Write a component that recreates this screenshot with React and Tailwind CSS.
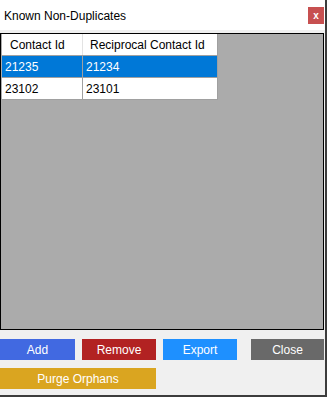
import { useState } from "react";

const rows = [
  { id: "21235", rec: "21234" },
  { id: "23102", rec: "23101" },
];

function Btn({ label, className }) {
  return (
    <button
      className={`h-[21px] text-white text-[12px] leading-none flex items-center justify-center ${className}`}
    >
      {label}
    </button>
  );
}

export default function App() {
  const [selected, setSelected] = useState(0);

  return (
    <div
      className="w-[327px] h-[397px] bg-[#f0f0f0] border-r-2 border-b-2 border-[#3c3c3c] flex flex-col text-black"
      style={{ fontFamily: '"Liberation Sans", Arial, sans-serif' }}
    >
      {/* title bar */}
      <div className="h-[30px] bg-white flex items-start justify-between shrink-0">
        <span className="text-[12px] pl-[4px] pt-[7px]">Known Non-Duplicates</span>
        <div className="w-[16px] h-[17px] mt-[7px] mr-[1px] bg-[#c75050] text-white text-[10px] font-bold flex items-center justify-center leading-none">
          x
        </div>
      </div>

      {/* grid panel */}
      <div className="mt-[3px] w-[324px] h-[297px] border border-black bg-[#ababab] shrink-0 pl-px">
        <div className="w-[216px] bg-white border-r border-[#a0a0a0] text-[12px]">
          <div className="flex h-[22px] border-b border-[#a0a0a0] bg-white">
            <div className="w-[81px] border-r border-[#e3e3e3] pl-[8px] flex items-center">Contact Id</div>
            <div className="flex-1 pl-[7px] flex items-center">Reciprocal Contact Id</div>
          </div>
          {rows.map((r, i) => (
            <div
              key={r.id}
              onClick={() => setSelected(i)}
              className={`flex h-[22px] border-b border-[#a0a0a0] ${
                selected === i ? "bg-[#0078d7] text-white" : "bg-white"
              }`}
            >
              <div className="w-[81px] border-r border-[#a0a0a0] pl-[3px] flex items-center">{r.id}</div>
              <div className="flex-1 pl-[3px] flex items-center">{r.rec}</div>
            </div>
          ))}
        </div>
      </div>

      {/* buttons */}
      <div className="flex mt-[9px] gap-[7px]">
        <Btn label="Add" className="w-[75px] bg-[#4169e1]" />
        <Btn label="Remove" className="w-[74px] bg-[#b22222]" />
        <Btn label="Export" className="w-[74px] bg-[#1e90ff]" />
        <Btn label="Close" className="w-[73px] ml-[7px] bg-[#696969]" />
      </div>
      <div className="flex mt-[8px]">
        <Btn label="Purge Orphans" className="w-[156px] bg-[#daa520]" />
      </div>
    </div>
  );
}
